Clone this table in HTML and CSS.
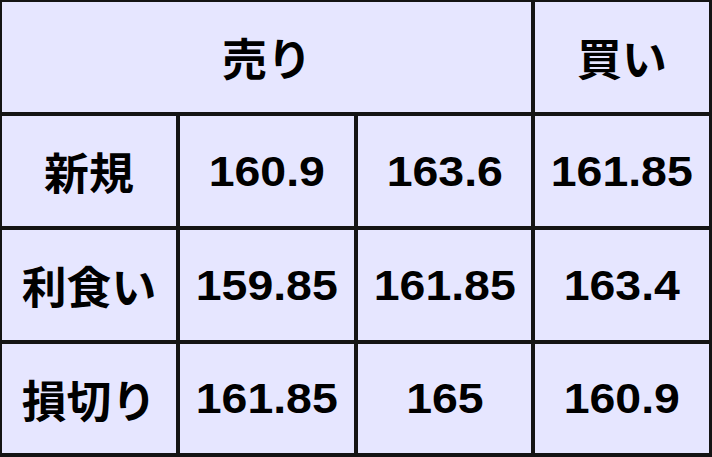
FILE: index.html
```html
<!DOCTYPE html>
<html lang="ja">
<head>
<meta charset="utf-8">
<link rel="stylesheet" href="styles.css">
</head>
<body>
<div class="grid">
  <div class="cell head span3"><span class="jp">売り</span></div>
  <div class="cell head"><span class="jp">買い</span></div>

  <div class="cell"><span class="jp">新規</span></div>
  <div class="cell"><span class="num">160.9</span></div>
  <div class="cell"><span class="num">163.6</span></div>
  <div class="cell"><span class="num">161.85</span></div>

  <div class="cell"><span class="jp">利食い</span></div>
  <div class="cell"><span class="num">159.85</span></div>
  <div class="cell"><span class="num">161.85</span></div>
  <div class="cell"><span class="num">163.4</span></div>

  <div class="cell"><span class="jp">損切り</span></div>
  <div class="cell"><span class="num">161.85</span></div>
  <div class="cell"><span class="num">165</span></div>
  <div class="cell"><span class="num">160.9</span></div>
</div>
</body>
</html>
```

FILE: styles.css
```css
html, body {
  margin: 0;
  padding: 0;
  background: #e6e6ff;
}
.grid {
  box-sizing: border-box;
  width: 712px;
  height: 457px;
  display: grid;
  grid-template-columns: 174px 174px 173px 174px;
  grid-template-rows: 110px 110px 110px 109px;
  gap: 4px;
  padding: 2px 3px 4px 2px;
  background: #141414;
}
.cell {
  background: #e6e6ff;
  display: flex;
  align-items: center;
  justify-content: center;
  color: #000;
}
.span3 {
  grid-column: span 3;
}
.jp {
  font-family: "Noto Sans CJK JP", "Liberation Sans", sans-serif;
  font-weight: 700;
  font-size: 44px;
  line-height: 1;
  display: inline-block;
  transform: scaleX(1.02);
}
.num {
  font-family: "Liberation Sans", Arial, sans-serif;
  font-weight: 700;
  font-size: 43px;
  line-height: 1;
  display: inline-block;
  transform: scaleX(1.08);
}
```
